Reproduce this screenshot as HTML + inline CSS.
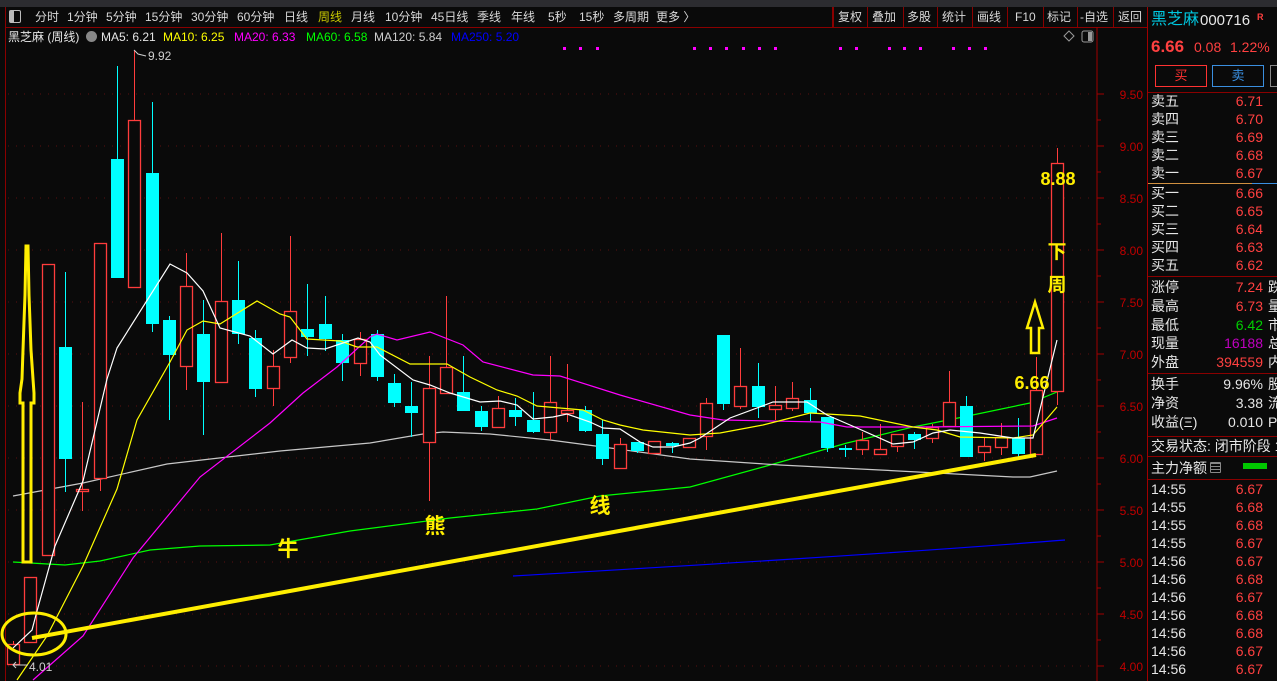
<!DOCTYPE html>
<html><head><meta charset="utf-8"><style>
*{margin:0;padding:0;box-sizing:border-box}
body{width:1277px;height:681px;background:#0a0a0a;overflow:hidden;position:relative;font-family:"Liberation Sans","Noto Sans CJK SC",sans-serif;color:#e0e0e0}
.a{position:absolute;white-space:nowrap;line-height:1}
.tb{font-size:12px;top:11px;color:#d8d8d8}
.rp{font-size:14px}
.lb{left:1151px;color:#e6e6e6}
.vl{right:14px;text-align:right;color:#ff4040}
.c3{left:1268px;color:#e6e6e6}
.hl{position:absolute;height:1px;background:#8a0000}
</style></head><body>
<div class="a" style="left:0;top:0;width:1277px;height:7px;background:#2c2c30"></div>
<div class="hl" style="left:5px;top:27px;width:1143px"></div>
<div style="position:absolute;left:5px;top:7px;width:1px;height:674px;background:#8a0000"></div>
<div style="position:absolute;left:1147px;top:7px;width:1px;height:674px;background:#a00000"></div>
<div style="position:absolute;left:9px;top:10px;width:12px;height:13px;border:1px solid #bbb;border-radius:2px"><div style="width:4px;height:11px;background:#bbb"></div></div>
<div class="a tb" style="left:35px">分时</div>
<div class="a tb" style="left:67px">1分钟</div>
<div class="a tb" style="left:106px">5分钟</div>
<div class="a tb" style="left:145px">15分钟</div>
<div class="a tb" style="left:191px">30分钟</div>
<div class="a tb" style="left:237px">60分钟</div>
<div class="a tb" style="left:284px">日线</div>
<div class="a tb" style="left:318px;color:#c8c800">周线</div>
<div class="a tb" style="left:351px">月线</div>
<div class="a tb" style="left:385px">10分钟</div>
<div class="a tb" style="left:431px">45日线</div>
<div class="a tb" style="left:477px">季线</div>
<div class="a tb" style="left:511px">年线</div>
<div class="a tb" style="left:548px">5秒</div>
<div class="a tb" style="left:579px">15秒</div>
<div class="a tb" style="left:613px">多周期</div>
<div class="a tb" style="left:656px">更多 〉</div>
<div class="a tb" style="left:838px">复权</div>
<div class="a tb" style="left:872px">叠加</div>
<div class="a tb" style="left:907px">多股</div>
<div class="a tb" style="left:942px">统计</div>
<div class="a tb" style="left:977px">画线</div>
<div class="a tb" style="left:1015px">F10</div>
<div class="a tb" style="left:1047px">标记</div>
<div class="a tb" style="left:1080px">-自选</div>
<div class="a tb" style="left:1118px">返回</div>
<div style="position:absolute;top:7px;left:832px;width:2px;height:20px;background:#8a0000"></div>
<div style="position:absolute;top:7px;left:867px;width:1px;height:20px;background:#8a0000"></div>
<div style="position:absolute;top:7px;left:903px;width:1px;height:20px;background:#8a0000"></div>
<div style="position:absolute;top:7px;left:937px;width:1px;height:20px;background:#8a0000"></div>
<div style="position:absolute;top:7px;left:972px;width:1px;height:20px;background:#8a0000"></div>
<div style="position:absolute;top:7px;left:1007px;width:1px;height:20px;background:#8a0000"></div>
<div style="position:absolute;top:7px;left:1043px;width:1px;height:20px;background:#8a0000"></div>
<div style="position:absolute;top:7px;left:1077px;width:1px;height:20px;background:#8a0000"></div>
<div style="position:absolute;top:7px;left:1113px;width:1px;height:20px;background:#8a0000"></div>

<div class="a" style="left:8px;top:31px;font-size:12px;color:#e6e6e6">黑芝麻 (周线)</div>
<div class="a" style="left:86px;top:31px;width:11px;height:11px;border-radius:50%;background:#888"></div>
<div class="a" style="left:101px;top:31px;font-size:12px;color:#e6e6e6">MA5: 6.21</div>
<div class="a" style="left:163px;top:31px;font-size:12px;color:#ffff00">MA10: 6.25</div>
<div class="a" style="left:234px;top:31px;font-size:12px;color:#ff00ff">MA20: 6.33</div>
<div class="a" style="left:306px;top:31px;font-size:12px;color:#00ff00">MA60: 6.58</div>
<div class="a" style="left:374px;top:31px;font-size:12px;color:#cfcfcf">MA120: 5.84</div>
<div class="a" style="left:451px;top:31px;font-size:12px;color:#0000ff">MA250: 5.20</div>

<svg id="ch" width="1147" height="681" style="position:absolute;left:0;top:0" xmlns="http://www.w3.org/2000/svg">
<g id="grid"></g>
<line x1="1097" y1="27" x2="1097" y2="681" stroke="#a00000"/>
<path d="M1069 31 l5 5 l-5 5 l-5 -5z" fill="none" stroke="#999"/>
<rect x="1082" y="31" width="11" height="11" rx="2" fill="none" stroke="#999"/><rect x="1088" y="32" width="4" height="9" fill="#999"/>
<g fill="#ff00ff" id="dots"></g>
<polyline fill="none" stroke="#00ff00" stroke-width="1.2" points="13,562 65,565 100,561 150,550 200,546 270,545 350,531 450,518 537,509 600,496 690,487 763,467 847,443 913,427 963,417 1030,403 1057,392"/>
<polyline fill="none" stroke="#c8c8c8" stroke-width="1.2" points="13,496 83,483 167,464 280,451 370,443 423,434 443,432 490,434 550,440 603,447 690,459 780,465 880,470 1013,477 1030,477 1057,471"/>
<path d="M513,576 C700,565 900,553 1065,540" fill="none" stroke="#0000ff" stroke-width="1.2"/>
<g id="cd"></g>
<polyline fill="none" stroke="#ff00ff" stroke-width="1.2" points="33,680 83,636 133,558 200,477 270,423 303,393 337,367 370,337 377,334 397,340 430,332 463,345 483,362 533,375 560,376 620,395 690,415 723,420 820,422 847,427 920,427 1033,426 1057,418"/>
<polyline fill="none" stroke="#ffff00" stroke-width="1.2" points="17,680 47,636 83,566 117,489 137,420 170,362 187,330 203,321 220,324 257,301 280,314 290,317 307,339 340,341 357,347 377,347 410,364 447,364 470,377 497,390 517,396 537,406 560,408 583,410 603,420 620,425 643,430 690,435 720,433 763,425 810,413 860,416 913,427 937,430 960,437 1013,438 1033,435 1057,407"/>
<polyline fill="none" stroke="#ffffff" stroke-width="1.2" points="13,648 32,630 37,611 55,546 83,481 107,379 117,348 170,264 187,273 203,291 220,328 250,336 273,354 292,340 307,348 325,349 358,338 370,342 380,355 413,380 430,385 450,393 480,402 500,401 517,405 533,419 553,417 567,414 590,422 603,428 620,429 640,442 653,447 673,447 690,443 700,438 730,418 773,402 807,402 827,415 857,428 893,444 913,442 933,433 950,430 980,433 1013,438 1033,438 1043,397 1057,340"/>
<line x1="32" y1="638" x2="1036" y2="455" stroke="#ffee00" stroke-width="4"/>
<ellipse cx="34" cy="634" rx="32" ry="21" fill="none" stroke="#ffee00" stroke-width="3"/>
<polygon points="27,246 28,246 29,295 30,322 31,350 33,379 34,393 34,403 31,403 31,562 23,562 23,403 20,403 20,393 22,379 23,350 24,322 25,295 26,246" fill="none" stroke="#ffee00" stroke-width="3"/>
<polygon points="1035,302 1043,328 1039,328 1039,353 1031,353 1031,328 1027,328" fill="none" stroke="#ffee00" stroke-width="2.5"/>
<g font-family="Liberation Sans,Noto Sans CJK SC,sans-serif" font-weight="bold" fill="#ffee00" text-anchor="middle">
<text x="288" y="556" font-size="21">牛</text>
<text x="435" y="533" font-size="21">熊</text>
<text x="600" y="513" font-size="21">线</text>
<text x="1058" y="185" font-size="18">8.88</text>
<text x="1057" y="258" font-size="19">下</text>
<text x="1057" y="291" font-size="19">周</text>
<text x="1032" y="389" font-size="18">6.66</text>
</g>
<g font-family="Liberation Sans,sans-serif" font-size="12" fill="#cfcfcf">
<polyline points="134,50 138,54 146,56" fill="none" stroke="#cfcfcf"/>
<text x="148" y="60">9.92</text>
<polyline points="16,662 13,665 16,668" fill="none" stroke="#cfcfcf"/><line x1="13" y1="665" x2="28" y2="665" stroke="#cfcfcf"/>
<text x="29" y="671">4.01</text>
</g>
<g id="ax" font-family="Liberation Sans,sans-serif" font-size="12" fill="#c00000" text-anchor="end"></g>
</svg>

<div class="a" style="left:1151px;top:12px;font-size:16px;color:#00c8e0">黑芝麻</div>
<div class="a" style="left:1200px;top:13px;font-size:15px;color:#e6e6e6">000716</div>
<div class="a" style="left:1257px;top:13px;font-size:9px;color:#ff4040;font-weight:bold">R</div>
<div class="a" style="left:1151px;top:38px;font-size:17px;color:#ff4040;font-weight:bold">6.66</div>
<div class="a" style="left:1194px;top:40px;font-size:14px;color:#ff4040">0.08</div>
<div class="a" style="left:1230px;top:40px;font-size:14px;color:#ff4040">1.22%</div>
<div class="a" style="left:1155px;top:65px;width:52px;height:22px;border:1px solid #ff3232;color:#ff3232;font-size:13px;text-align:center;line-height:20px">买</div>
<div class="a" style="left:1212px;top:65px;width:52px;height:22px;border:1px solid #3a8fe0;color:#3a8fe0;font-size:13px;text-align:center;line-height:20px">卖</div>
<div class="a" style="left:1270px;top:65px;width:20px;height:22px;border:1px solid #888"></div>
<div class="hl" style="left:1148px;top:92px;width:129px"></div>
<div class="a" style="left:1148px;top:183px;width:104px;height:1px;background:#d09040"></div>
<div class="a" style="left:1252px;top:183px;width:25px;height:1px;background:#3a8fe0"></div>
<div class="hl" style="left:1148px;top:276px;width:129px"></div>
<div class="hl" style="left:1148px;top:373px;width:129px"></div>
<div class="hl" style="left:1148px;top:436px;width:129px"></div>
<div class="hl" style="left:1148px;top:456px;width:129px"></div>
<div class="hl" style="left:1148px;top:479px;width:129px"></div>
<div id="rp"></div>
<div class="a" style="left:1210px;top:462px;width:11px;height:11px;border:1px solid #888;border-radius:1px;background:repeating-linear-gradient(#888 0 1px,transparent 1px 3px)"></div>
<div class="a" style="left:1243px;top:463px;width:24px;height:6px;background:#00c800"></div>
<script>
var S='http://www.w3.org/2000/svg';
function el(p,t,a,tx){var e=document.createElementNS(S,t);for(var k in a)e.setAttribute(k,a[k]);if(tx)e.textContent=tx;p.appendChild(e);return e;}
var g=document.getElementById('grid'),ax=document.getElementById('ax');
for(var i=0;i<12;i++){var y=94+i*52;el(g,'line',{x1:8,y1:y,x2:1095,y2:y,stroke:'#5a1010','stroke-dasharray':'1,7'});
el(ax,'text',{x:1143,y:y+5},(9.5-i*0.5).toFixed(2));el(g,'line',{x1:1097,y1:y,x2:1104,y2:y,stroke:'#a00000'});el(g,'line',{x1:1097,y1:y+26,x2:1101,y2:y+26,stroke:'#a00000'});}
var dx=[564,580,597,694,710,726,743,759,775,840,856,889,904,920,953,969,985],d=document.getElementById('dots');
dx.forEach(function(x){el(d,'rect',{x:x-1,y:47,width:3,height:3});});
var C=[[13,644,664,641,664,'r'],[30,577,642,577,642,'r'],[48,264,555,264,555,'r'],[65,347,459,272,492,'c'],[82,489,491,402,511,'r'],[100,243,478,243,491,'r'],[117,159,278,66,278,'c'],[134,120,287,50,287,'r'],[152,173,324,102,332,'c'],[169,320,355,316,420,'c'],[186,286,366,253,390,'r'],[203,334,382,300,435,'c'],[221,301,382,233,382,'r'],[238,300,334,261,344,'c'],[255,338,389,330,397,'c'],[273,366,388,350,406,'r'],[290,311,357,236,363,'r'],[307,329,337,284,356,'c'],[325,324,339,296,351,'c'],[342,340,363,334,381,'c'],[360,339,363,332,376,'r'],[377,334,377,330,381,'c'],[394,383,403,374,407,'c'],[411,406,413,382,437,'c'],[429,388,442,356,501,'r'],[446,367,393,296,393,'r'],[463,392,411,356,411,'c'],[481,411,427,406,431,'c'],[498,408,427,396,427,'r'],[515,410,417,398,426,'c'],[533,420,432,392,433,'c'],[550,402,432,356,440,'r'],[567,410,413,364,422,'r'],[585,410,431,406,432,'c'],[602,434,459,420,465,'c'],[620,444,468,438,469,'r'],[637,442,451,442,453,'c'],[654,441,453,441,453,'r'],[672,443,446,442,453,'c'],[689,438,447,438,447,'r'],[706,403,436,398,450,'r'],[723,335,404,335,410,'c'],[740,386,406,348,409,'r'],[758,386,407,363,418,'c'],[775,405,409,386,420,'r'],[792,398,408,382,411,'r'],[810,400,413,388,421,'c'],[827,417,448,417,452,'c'],[845,448,449,445,457,'c'],[862,440,449,432,455,'r'],[880,449,454,424,454,'r'],[897,434,446,434,452,'r'],[914,434,440,432,449,'c'],[932,427,438,424,443,'r'],[949,402,426,371,427,'r'],[966,406,457,396,457,'c'],[984,446,452,438,461,'r'],[1001,437,447,423,455,'r'],[1018,438,454,418,457,'c'],[1036,390,454,357,454,'r'],[1057,163,391,148,405,'r']];
var cd=document.getElementById('cd');
C.forEach(function(c){var x=c[0],col=c[5]=='r'?'#ff3c3c':'#00ffff';
el(cd,'line',{x1:x+0.5,y1:c[3],x2:x+0.5,y2:c[4],stroke:col});
var h=Math.max(c[2]-c[1],2);
if(c[5]=='r')el(cd,'rect',{x:x-5.5,y:c[1]+0.5,width:12,height:h,fill:'#0a0a0a',stroke:col,'stroke-width':1.3});
else el(cd,'rect',{x:x-6,y:c[1],width:13,height:h,fill:col});});
var R=[['卖五','6.71',101],['卖四','6.70',119],['卖三','6.69',137],['卖二','6.68',155],['卖一','6.67',173],['买一','6.66',193],['买二','6.65',211],['买三','6.64',229],['买四','6.63',247],['买五','6.62',265],
['涨停','7.24',287,'#ff4040','跌'],['最高','6.73',306,'#ff4040','量'],['最低','6.42',325,'#00d000','市'],['现量','16188',343,'#c000c0','总'],['外盘','394559',362,'#ff4040','内'],
['换手','9.96%',384,'#e6e6e6','股'],['净资','3.38',403,'#e6e6e6','流'],['收益(Ξ)','0.010',422,'#e6e6e6','P']];
var tm=['14:55','6.67','14:55','6.68','14:55','6.68','14:55','6.67','14:56','6.67','14:56','6.68','14:56','6.67','14:56','6.68','14:56','6.68','14:56','6.67','14:56','6.67'];
for(var j=0;j<11;j++)R.push([tm[2*j],tm[2*j+1],489+j*18]);
var h='';R.forEach(function(r){var t=r[2]-7;h+='<div class="a rp lb" style="top:'+t+'px">'+r[0]+'</div><div class="a rp vl" style="top:'+t+'px;color:'+(r[3]||'#ff4040')+'">'+r[1]+'</div>'+(r[4]?'<div class="a rp c3" style="top:'+t+'px">'+r[4]+'</div>':'');});
h+='<div class="a rp lb" style="top:439px">交易状态: 闭市阶段 1</div><div class="a rp lb" style="top:461px">主力净额</div>';
document.getElementById('rp').innerHTML=h;
</script>
</body></html>
